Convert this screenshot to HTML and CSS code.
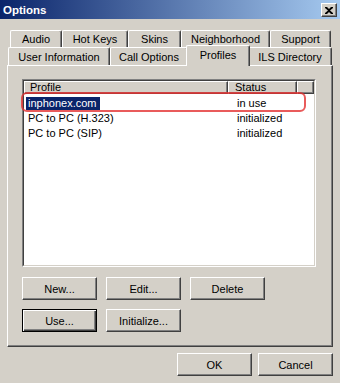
FILE: index.html
```html
<!DOCTYPE html>
<html lang="en">
<head>
  <meta charset="UTF-8" />
  <title>Options</title>
  <link rel="stylesheet" href="styles.css">
</head>
<body>
  <div class="titlebar">
    <span class="title">Options</span>
    <span class="close">
      <svg width="8" height="7" viewBox="0 0 8 7"><path d="M0 0h2l2 2 2-2h2v1L5 3.5 8 6v1H6L4 5 2 7H0V6l3-2.5L0 1z" fill="#000"/></svg>
    </span>
  </div>

  <div class="tabs">
    <div class="tab-row row-back">
      <div class="tab w-audio">Audio</div>
      <div class="tab w-hotkeys">Hot Keys</div>
      <div class="tab w-skins">Skins</div>
      <div class="tab w-neighborhood">Neighborhood</div>
      <div class="tab w-support">Support</div>
    </div>
    <div class="tab-row row-front">
      <div class="tab w-userinfo">User Information</div>
      <div class="tab w-calloptions">Call Options</div>
      <div class="tab w-profiles active">Profiles</div>
      <div class="tab w-ils">ILS Directory</div>
    </div>
  </div>

  <div class="panel">
    <div class="listview">
      <div class="lv-inner">
        <div class="lv-header">
          <div class="col col-profile">Profile</div>
          <div class="col col-status">Status</div>
          <div class="col col-fill"></div>
        </div>
        <div class="lv-body">
          <div class="lv-row">
            <span class="cell-name"><span class="selected">inphonex.com</span></span>
            <span class="cell-status">in use</span>
          </div>
          <div class="lv-row">
            <span class="cell-name"><span class="item">PC to PC (H.323)</span></span>
            <span class="cell-status">initialized</span>
          </div>
          <div class="lv-row">
            <span class="cell-name"><span class="item">PC to PC (SIP)</span></span>
            <span class="cell-status">initialized</span>
          </div>
        </div>
      </div>
    </div>

    <div class="btn-row">
      <button class="btn">New...</button>
      <button class="btn">Edit...</button>
      <button class="btn">Delete</button>
    </div>
    <div class="btn-row second">
      <button class="btn default">Use...</button>
      <button class="btn">Initialize...</button>
    </div>
  </div>

  <div class="dialog-buttons">
    <button class="btn">OK</button>
    <button class="btn">Cancel</button>
  </div>

  <div class="annotation"></div>
</body>
</html>
```

FILE: styles.css
```css
body {
  margin: 0;
  width: 340px;
  height: 383px;
  overflow: hidden;
  position: relative;
  background: #d4d0c8;
  font-family: "Liberation Sans", Arial, sans-serif;
  font-size: 11px;
  color: #000;
}
.titlebar {
  height: 19px;
  box-sizing: border-box;
  padding: 0 3px 0 3px;
  display: flex;
  align-items: center;
  justify-content: space-between;
  background: linear-gradient(to right, #0a246a, #a6caf0);
}
.title {
  color: #fff;
  font-weight: bold;
  font-size: 11.5px;
  padding-top: 1px;
}
.close {
  width: 16px;
  height: 14px;
  box-sizing: border-box;
  background: #d4d0c8;
  border: 1px solid;
  border-color: #fff #404040 #404040 #fff;
  box-shadow: inset -1px -1px #808080;
  display: flex;
  align-items: center;
  justify-content: center;
  margin-top: 1px;
}

/* tabs */
.tabs {
  margin-top: 11px;
}
.tab-row {
  display: flex;
}
.row-back {
  margin-left: 10px;
  height: 17px;
}
.row-front {
  margin-left: 8px;
  height: 18px;
}
.tab {
  box-sizing: border-box;
  height: 100%;
  border-top: 1px solid #fff;
  border-left: 1px solid #fff;
  border-right: 1px solid #404040;
  box-shadow: inset -1px 0 #808080;
  border-radius: 2px 2px 0 0;
  display: flex;
  align-items: center;
  justify-content: center;
  background: #d4d0c8;
}
.w-audio { width: 52px; }
.w-hotkeys { width: 66px; }
.w-skins { width: 53px; }
.w-neighborhood { width: 89px; }
.w-support { width: 61px; }
.w-userinfo { width: 102px; }
.w-calloptions { width: 78px; }
.w-profiles { width: 60px; }
.w-ils { width: 84px; }
.tab.active {
  position: relative;
  z-index: 1;
  width: 64px;
  height: 21px;
  margin: -2px -2px -1px;
  padding-bottom: 2px;
}

/* panel */
.panel {
  margin: 0 7px;
  height: 282px;
  box-sizing: border-box;
  border: 1px solid;
  border-color: #fff #404040 #404040 #fff;
  box-shadow: inset -1px -1px #808080;
  padding: 13px 0 0 14px;
}
.listview {
  width: 294px;
  height: 188px;
  box-sizing: border-box;
  border: 1px solid;
  border-color: #808080 #fff #fff #808080;
}
.lv-inner {
  height: 100%;
  box-sizing: border-box;
  border: 1px solid;
  border-color: #404040 #d4d0c8 #d4d0c8 #404040;
  background: #fff;
}
.lv-header {
  display: flex;
  height: 13px;
}
.col {
  box-sizing: border-box;
  height: 100%;
  background: #d4d0c8;
  border-top: 1px solid #fff;
  border-left: 1px solid #fff;
  border-right: 1px solid #404040;
  border-bottom: 1px solid #404040;
  box-shadow: inset -1px -1px #808080;
  line-height: 11px;
}
.col-profile {
  width: 204px;
  padding-left: 5px;
}
.col-status {
  width: 69px;
  padding-left: 6px;
}
.col-fill {
  flex: 1;
}
.lv-body {
  padding-top: 2px;
}
.lv-row {
  display: flex;
  height: 14px;
  align-items: center;
}
.lv-row + .lv-row {
  margin-top: 1px;
}
.cell-name {
  width: 204px;
  padding-left: 2px;
}
.cell-status {
  padding-left: 7px;
}
.selected,
.item {
  display: inline-block;
  height: 13px;
  line-height: 13px;
  padding: 0 3px 0 2px;
}
.selected {
  background: #0a246a;
  color: #fff;
}

/* buttons */
.btn-row {
  display: flex;
  gap: 9px;
  margin-top: 10px;
}
.btn-row.second {
  margin-top: 9px;
}
.btn {
  width: 75px;
  height: 23px;
  box-sizing: border-box;
  padding: 0;
  margin: 0;
  background: #d4d0c8;
  border: 1px solid;
  border-color: #fff #404040 #404040 #fff;
  box-shadow: inset -1px -1px #808080;
  font-family: "Liberation Sans", Arial, sans-serif;
  font-size: 11px;
  color: #000;
}
.btn.default {
  border-color: #000;
  box-shadow: inset 1px 1px #fff, inset -1px -1px #404040, inset -2px -2px #808080;
}
.dialog-buttons {
  display: flex;
  justify-content: flex-end;
  gap: 6px;
  margin-top: 6px;
  padding-right: 7px;
}

/* highlight drawn over the list */
.annotation {
  position: absolute;
  left: 21px;
  top: 92px;
  width: 285px;
  height: 20px;
  box-sizing: border-box;
  border: 2px solid rgba(228, 50, 50, 0.8);
  border-radius: 6px;
}
```
